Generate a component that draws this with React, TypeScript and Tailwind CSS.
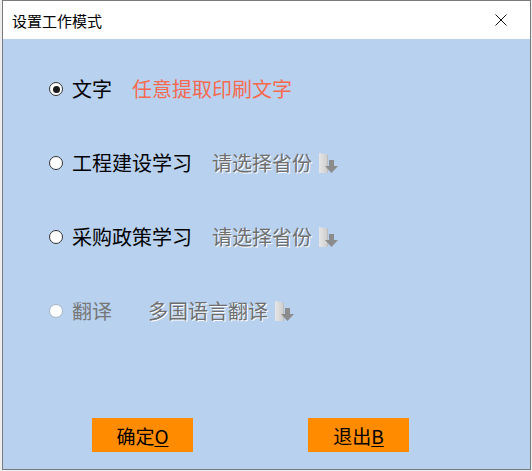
import React from 'react';

const font = { fontFamily: '"Noto Sans CJK SC", "Noto Sans", sans-serif' };

const Radio = ({ checked = false, disabled = false }: { checked?: boolean; disabled?: boolean }) => (
  <span
    className={
      'flex h-[14px] w-[14px] shrink-0 items-center justify-center rounded-full border bg-white ' +
      (disabled ? 'border-[#a9b4c6]' : 'border-[#333333]')
    }
  >
    {checked && <span className="h-[7px] w-[7px] rounded-full bg-[#1a1a1a]" />}
  </span>
);

const DropIcon = () => (
  <svg width="21" height="21" viewBox="0 0 21 21" className="shrink-0">
    <defs>
      <linearGradient id="pg" x1="0" x2="1" y1="0" y2="0">
        <stop offset="0" stopColor="#e6e6e6" />
        <stop offset="1" stopColor="#cfcfcf" />
      </linearGradient>
    </defs>
    <path d="M0 0 L8 1.5 L8 20 L0 20 Z" fill="url(#pg)" />
    <path d="M8 1.5 L9 2 L9 20 L8 20 Z" fill="#bdbdbd" />
    <path d="M10 7 H15 V13 H19 L12.5 20 L6 13 H10 Z" fill="#8c8c8c" />
  </svg>
);

const Etched = ({ children }: { children: React.ReactNode }) => (
  <span className="text-[#6e6e6e] [text-shadow:1px_1px_0_#ffffff]">{children}</span>
);

const App: React.FC = () => {
  return (
    <div className="h-[471px] w-[532px] overflow-hidden bg-[#eeeeee]" style={font}>
      <div className="ml-[2px] flex h-[470px] w-[529px] flex-col border border-[#7a7a7a] bg-white">
        {/* title bar */}
        <div className="flex h-[38px] shrink-0 items-center justify-between pl-[9px] pr-[23px]">
          <span className="text-[15px] leading-none text-black">设置工作模式</span>
          <svg width="12" height="12" viewBox="0 0 12 12">
            <path d="M0.5 0.5 L11.5 11.5 M11.5 0.5 L0.5 11.5" stroke="#111" strokeWidth="1" />
          </svg>
        </div>

        {/* body */}
        <div className="flex flex-1 flex-col bg-[#b8d1ef] pt-[35px] pb-[17px] text-[20px] leading-none">
          <div className="flex flex-col gap-[44px] pl-[46px]">
            <div className="flex h-[30px] items-center">
              <Radio checked />
              <span className="ml-[9px] text-black">文字</span>
              <span className="ml-[20px] text-[#f66a50]">任意提取印刷文字</span>
            </div>
            <div className="flex h-[30px] items-center">
              <Radio />
              <span className="ml-[9px] text-black">工程建设学习</span>
              <span className="ml-[20px]">
                <Etched>请选择省份</Etched>
              </span>
              <span className="ml-[7px]">
                <DropIcon />
              </span>
            </div>
            <div className="flex h-[30px] items-center">
              <Radio />
              <span className="ml-[9px] text-black">采购政策学习</span>
              <span className="ml-[20px]">
                <Etched>请选择省份</Etched>
              </span>
              <span className="ml-[7px]">
                <DropIcon />
              </span>
            </div>
            <div className="flex h-[30px] items-center">
              <Radio disabled />
              <span className="ml-[9px] text-[#767676]">翻译</span>
              <span className="ml-[36px]">
                <Etched>多国语言翻译</Etched>
              </span>
              <span className="ml-[7px]">
                <DropIcon />
              </span>
            </div>
          </div>

          <div className="flex-1" />

          <div className="flex pl-[89px]">
            <button className="flex h-[34px] w-[101px] items-center justify-center bg-[#ff8c00] text-[19px] text-black">
              确定<span className="underline underline-offset-2">O</span>
            </button>
            <button className="ml-[115px] flex h-[34px] w-[101px] items-center justify-center bg-[#ff8c00] text-[19px] text-black">
              退出<span className="underline underline-offset-2">B</span>
            </button>
          </div>
        </div>
      </div>
    </div>
  );
};

export default App;
